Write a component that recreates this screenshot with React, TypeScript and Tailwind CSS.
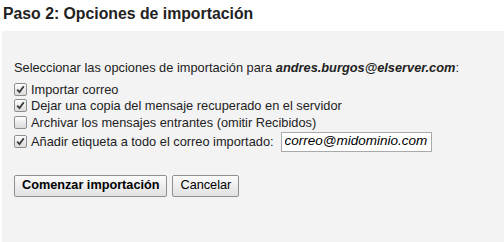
const opciones = [
  { label: 'Importar correo', checked: true },
  { label: 'Dejar una copia del mensaje recuperado en el servidor', checked: true },
  { label: 'Archivar los mensajes entrantes (omitir Recibidos)', checked: false },
];

function Casilla({ checked }: { checked: boolean }) {
  return (
    <span className="w-[13px] h-[13px] shrink-0 border border-[#8e8f8f] rounded-[2px] bg-gradient-to-b from-[#fdfdfd] to-[#dadada] flex items-center justify-center">
      {checked && (
        <svg width="9" height="9" viewBox="0 0 9 9">
          <path d="M1.2 4.6 L3.5 7 L7.8 1.3" fill="none" stroke="#3a3a3a" strokeWidth="1.8" />
        </svg>
      )}
    </span>
  );
}

export default function App() {
  return (
    <main className="w-[504px] h-[242px] bg-white text-[#222] font-['Liberation_Sans',Arial,sans-serif] overflow-hidden">
      <h1 className="text-[15.8px] font-bold leading-none pl-[3px] pt-[6px] h-[31px]">Paso 2: Opciones de importación</h1>
      <div className="ml-[2px] h-[211px] bg-[#f3f3f3] pl-[12px] pt-[29px] text-[12.8px]">
        <p className="leading-[16px]">
          Seleccionar las opciones de importación para <b className="italic">andres.burgos@elserver.com</b>:
        </p>
        <div className="mt-[5px] flex flex-col">
          {opciones.map((o) => (
            <label key={o.label} className="flex items-center h-[16.5px] gap-[4px]">
              <Casilla checked={o.checked} />
              <span>{o.label}</span>
            </label>
          ))}
          <label className="flex items-center h-[22px] gap-[4px]">
            <Casilla checked />
            <span>Añadir etiqueta a todo el correo importado:</span>
            <input
              type="text"
              defaultValue="correo@midominio.com"
              className="ml-[3px] w-[151px] h-[20px] border border-[#a9a9a9] bg-white px-[3px] text-[13.5px] italic text-black outline-none"
            />
          </label>
        </div>
        <div className="mt-[22px] flex gap-[5px]">
          <button className="h-[22px] px-[7px] border border-[#8f8f8f] rounded-[2px] bg-gradient-to-b from-[#fbfbfb] to-[#e1e1e1] text-[12.7px] font-bold text-black leading-none">
            Comenzar importación
          </button>
          <button className="h-[22px] px-[7px] border border-[#8f8f8f] rounded-[2px] bg-gradient-to-b from-[#fbfbfb] to-[#e1e1e1] text-[12.7px] text-black leading-none">
            Cancelar
          </button>
        </div>
      </div>
    </main>
  );
}
